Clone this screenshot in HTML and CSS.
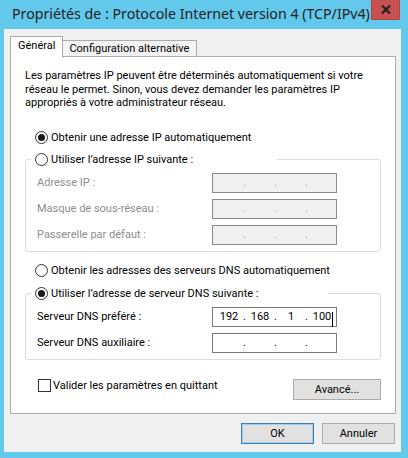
FILE: index.html
```html
<!DOCTYPE html>
<html lang="fr">
<head>
<meta charset="utf-8">
<link rel="stylesheet" href="styles.css">
</head>
<body>
<div class="window">
  <div class="titlebar">
    <span class="title">Propriétés de : Protocole Internet version 4 (TCP/IPv4)</span>
    <div class="close"><svg width="10" height="9" viewBox="0 0 10 9"><path d="M1 0.5 L9 8.5 M9 0.5 L1 8.5" stroke="#222" stroke-width="2.2" fill="none"/></svg></div>
  </div>
  <div class="body">
    <div class="tabs">
      <div class="tab active">Général</div>
      <div class="tab">Configuration alternative</div>
    </div>
    <div class="panel">
      <p class="intro">Les paramètres IP peuvent être déterminés automatiquement si votre<br>réseau le permet. Sinon, vous devez demander les paramètres IP<br>appropriés à votre administrateur réseau.</p>

      <div class="option first"><span class="radio checked"></span><span>Obtenir une adresse IP automatiquement</span></div>

      <fieldset class="group g1">
        <legend class="option leg1"><span class="radio"></span><span>Utiliser l’adresse IP suivante :</span></legend>
        <div class="rows">
          <div class="row disabled"><span class="lbl">Adresse IP :</span><div class="ip"><span class="oct"></span><span class="dot">.</span><span class="oct"></span><span class="dot">.</span><span class="oct"></span><span class="dot">.</span><span class="oct"></span></div></div>
          <div class="row disabled"><span class="lbl">Masque de sous-réseau :</span><div class="ip"><span class="oct"></span><span class="dot">.</span><span class="oct"></span><span class="dot">.</span><span class="oct"></span><span class="dot">.</span><span class="oct"></span></div></div>
          <div class="row disabled"><span class="lbl">Passerelle par défaut :</span><div class="ip"><span class="oct"></span><span class="dot">.</span><span class="oct"></span><span class="dot">.</span><span class="oct"></span><span class="dot">.</span><span class="oct"></span></div></div>
        </div>
      </fieldset>

      <div class="option dns-auto"><span class="radio"></span><span>Obtenir les adresses des serveurs DNS automatiquement</span></div>

      <fieldset class="group g2">
        <legend class="option leg2"><span class="radio checked"></span><span>Utiliser l’adresse de serveur DNS suivante :</span></legend>
        <div class="rows">
          <div class="row"><span class="lbl">Serveur DNS préféré :</span><div class="ip"><span class="oct">192</span><span class="dot">.</span><span class="oct">168</span><span class="dot">.</span><span class="oct">1</span><span class="dot">.</span><span class="oct"><span class="last">100<span class="caret"></span></span></span></div></div>
          <div class="row"><span class="lbl">Serveur DNS auxiliaire :</span><div class="ip"><span class="oct"></span><span class="dot">.</span><span class="oct"></span><span class="dot">.</span><span class="oct"></span><span class="dot">.</span><span class="oct"></span></div></div>
        </div>
      </fieldset>

      <div class="footer">
        <div class="check"><span class="box"></span><span>Valider les paramètres en quittant</span></div>
        <div class="btn adv">Avancé...</div>
      </div>
    </div>
    <div class="actions">
      <div class="btn default">OK</div>
      <div class="btn">Annuler</div>
    </div>
  </div>
</div>
</body>
</html>
```
FILE: styles.css
```css
html, body {
  margin: 0;
  padding: 0;
}
body {
  width: 408px;
  height: 458px;
  overflow: hidden;
  font-family: Roboto, "Noto Sans", sans-serif;
  font-size: 11px;
  color: #000;
}
.window {
  width: 408px;
  height: 458px;
  background: #62c8ec;
  display: flex;
  flex-direction: column;
}
.titlebar {
  height: 29px;
  display: flex;
  align-items: flex-start;
  justify-content: space-between;
}
.title {
  font-family: "Noto Sans", "Open Sans", sans-serif;
  font-size: 14.2px;
  line-height: 20px;
  padding: 4px 0 0 12px;
  color: #222;
  white-space: nowrap;
}
.close {
  width: 29px;
  height: 20px;
  margin-right: 8px;
  box-sizing: border-box;
  background: #c75050;
  border: 1px solid #b54545;
  border-top: none;
  display: flex;
  align-items: center;
  justify-content: center;
}
.body {
  flex: 1;
  margin: 0 7px 6px 4px;
  background: #f0f0f0;
  padding: 7px 5px 0 6px;
  display: flex;
  flex-direction: column;
}
.tabs {
  display: flex;
  align-items: flex-end;
  height: 21px;
}
.tab {
  box-sizing: border-box;
  height: 17px;
  border: 1px solid #acacac;
  border-bottom: none;
  background: #f3f3f3;
  padding: 0 7px 0 6px;
  line-height: 15px;
  margin-left: -1px;
  white-space: nowrap;
}
.tab.active {
  position: relative;
  z-index: 1;
  margin-left: 0;
  margin-bottom: -1px;
  height: 22px;
  background: #fff;
  padding: 0 7px 0 7px;
  line-height: 18px;
}
.panel {
  height: 358px;
  box-sizing: border-box;
  margin-top: -1px;
  background: #fff;
  border: 1px solid #acacac;
  padding: 12px 14px 0 14px;
  display: flex;
  flex-direction: column;
}
.intro {
  margin: 0;
  line-height: 13.5px;
  white-space: nowrap;
}
.option {
  display: flex;
  align-items: center;
  height: 15px;
  padding-left: 10px;
  white-space: nowrap;
}
.option.first {
  margin-top: 20px;
}
.radio {
  width: 11px;
  height: 11px;
  border: 1px solid #333;
  border-radius: 50%;
  background: #fff;
  margin-right: 3px;
  display: flex;
  align-items: center;
  justify-content: center;
  flex: none;
}
.radio.checked::after {
  content: "";
  width: 7px;
  height: 7px;
  border-radius: 50%;
  background: #1a1a1a;
}
.group {
  margin: 7px 0 0 0;
  padding: 0 11px 6px 11px;
  border: 1px solid #dcdcdc;
  border-radius: 3px;
  min-width: 0;
}
.group legend.option {
  margin-left: -6px;
  padding-left: 4px;
  background: #fff;
  box-sizing: border-box;
}
.leg1 { width: 246px; }
.leg2 { width: 297px; }
.rows {
  display: flex;
  flex-direction: column;
  gap: 6px;
  padding-top: 6px;
}
.row {
  display: flex;
  align-items: center;
  height: 20px;
}
.lbl {
  width: 175px;
  flex: none;
}
.row.disabled .lbl {
  color: #8d8d8d;
}
.ip {
  box-sizing: border-box;
  width: 125px;
  height: 20px;
  border: 1px solid #7a7a7a;
  background: #fff;
  display: flex;
  padding-left: 2px;
  line-height: 18px;
}
.row.disabled .ip {
  background: #f0f0f0;
  border-color: #8a8a8a;
  color: #9a9a9a;
}
.oct {
  width: 28px;
  text-align: center;
}
.dot {
  width: 3px;
  text-align: center;
}
.last {
  position: relative;
}
.caret {
  position: absolute;
  right: -2px;
  top: 2px;
  width: 1px;
  height: 15px;
  background: #000;
}
.g2 {
  margin-top: 8px;
}
.dns-auto {
  margin-top: 11px;
}
.footer {
  margin-top: 19px;
  display: flex;
  justify-content: space-between;
  align-items: flex-start;
  padding-left: 13px;
}
.check {
  display: flex;
  align-items: center;
  height: 13px;
}
.box {
  width: 11px;
  height: 11px;
  border: 1px solid #333;
  background: #fff;
  margin-right: 2px;
}
.btn {
  box-sizing: border-box;
  height: 21px;
  border: 1px solid #acacac;
  background: #e1e1e1;
  display: flex;
  align-items: center;
  justify-content: center;
  width: 73px;
}
.btn.adv {
  width: 88px;
}
.btn.default {
  border-color: #3c7fb1;
  box-shadow: inset 0 0 0 1px #a7cbeb;
}
.actions {
  display: flex;
  justify-content: flex-end;
  gap: 8px;
  margin-top: 9px;
  padding-right: 1px;
}
```
